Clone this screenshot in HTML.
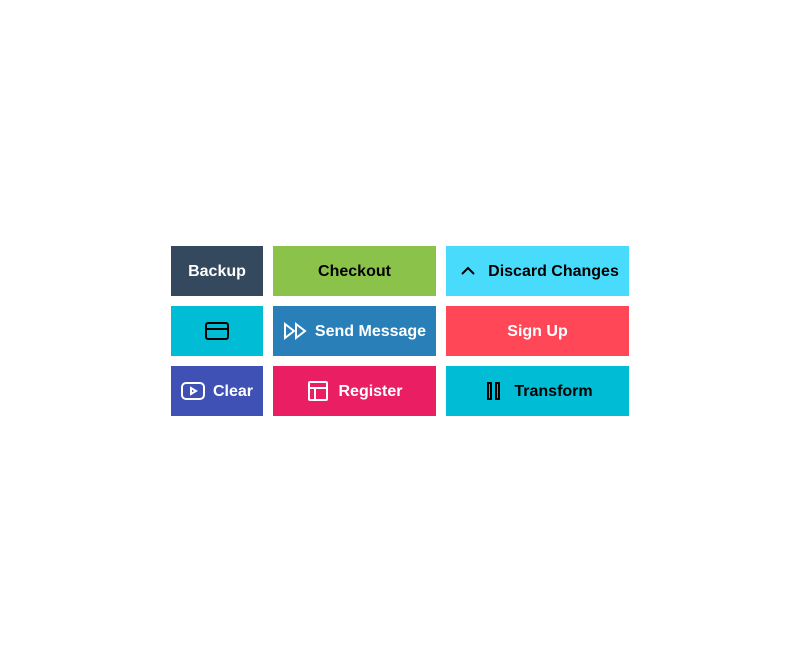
<!DOCTYPE html>
<html><head><style>
body{margin:0;width:800px;height:661px;background:#fff;font-family:"Liberation Sans",sans-serif;}
.b{position:absolute;height:48px;padding-top:2px;display:flex;align-items:center;justify-content:center;font-weight:bold;font-size:16px;color:#fff;}
.b svg{margin-right:8px;margin-top:-2px;}
</style></head><body>
<div class="b" style="left:171px;top:246px;width:92px;background:#34495e">Backup</div>
<div class="b" style="left:273px;top:246px;width:163px;background:#8bc34a;color:#000">Checkout</div>
<div class="b" style="left:446px;top:246px;width:183px;background:#48dbfb;color:#000"><svg width="24" height="24" viewBox="0 0 24 24" fill="none" stroke="#000" stroke-width="2"><path d="M6 15l6-6 6 6"/></svg>Discard Changes</div>
<div class="b" style="left:171px;top:306px;width:92px;background:#00bcd4"><svg style="margin:-2px 0 0 0" width="24" height="24" viewBox="0 0 24 24" fill="none" stroke="#000" stroke-width="2"><rect x="1" y="4" width="22" height="16" rx="2"/><path d="M1 10h22"/></svg></div>
<div class="b" style="left:273px;top:306px;width:163px;background:#2980b9"><svg width="24" height="24" viewBox="0 0 24 24" fill="none" stroke="#fff" stroke-width="2"><path d="M2 5l9 7-9 7zM13 5l9 7-9 7z"/></svg>Send Message</div>
<div class="b" style="left:446px;top:306px;width:183px;background:#ff4757">Sign Up</div>
<div class="b" style="left:171px;top:366px;width:92px;background:#3f51b5"><svg width="24" height="24" viewBox="0 0 24 24" fill="none" stroke="#fff" stroke-width="2"><rect x="1" y="4" width="22" height="16" rx="4"/><path d="M10 9l5 3-5 3z"/></svg>Clear</div>
<div class="b" style="left:273px;top:366px;width:163px;background:#e91e63"><svg width="24" height="24" viewBox="0 0 24 24" fill="none" stroke="#fff" stroke-width="2"><rect x="3" y="3" width="18" height="18" rx="1"/><path d="M3 9h18M9 9v12"/></svg>Register</div>
<div class="b" style="left:446px;top:366px;width:183px;background:#00bcd4;color:#000"><svg width="24" height="24" viewBox="0 0 24 24" fill="none" stroke="#000" stroke-width="2"><rect x="6" y="4" width="3" height="16"/><rect x="14" y="4" width="3" height="16"/></svg>Transform</div>
</body></html>
